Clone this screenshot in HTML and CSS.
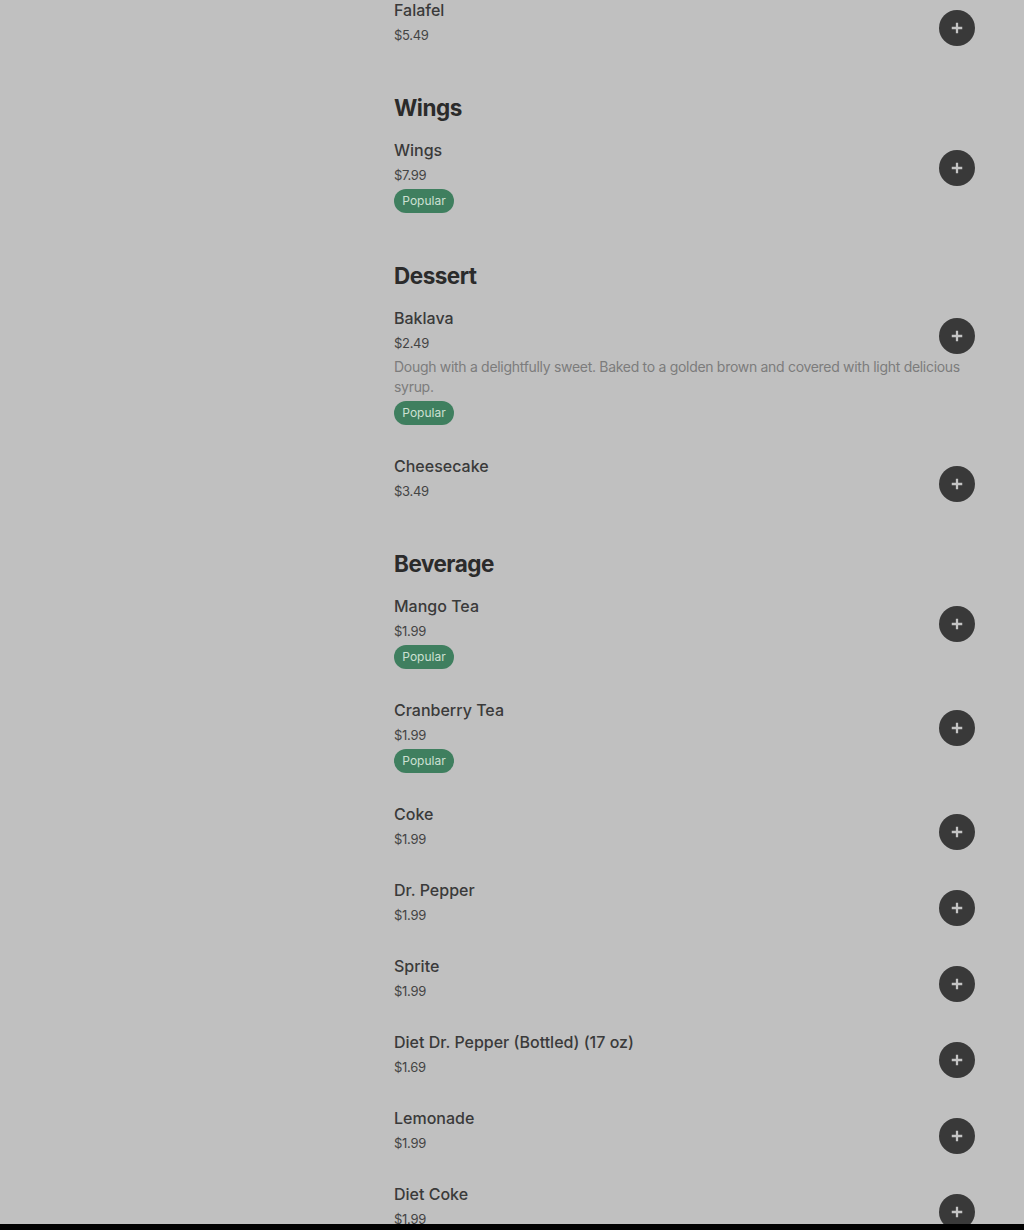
FILE: index.html
```html
<!DOCTYPE html>
<html lang="en">
<head>
<meta charset="utf-8">
<title>Menu</title>
<link rel="stylesheet" href="styles.css">
</head>
<body>
<main class="menu">
  <section class="section first">
    <ul class="items">
      <li class="item">
        <div class="info"><div class="name">Falafel</div><div class="price">$5.49</div></div>
        <button class="add" aria-label="Add"><svg viewBox="0 0 16 16" width="14" height="14"><path d="M8 2v12M2 8h12" stroke="currentColor" stroke-width="2.6"/></svg></button>
      </li>
    </ul>
  </section>

  <section class="section">
    <h2 class="heading">Wings</h2>
    <ul class="items">
      <li class="item">
        <div class="info"><div class="name">Wings</div><div class="price">$7.99</div><span class="badge">Popular</span></div>
        <button class="add" aria-label="Add"><svg viewBox="0 0 16 16" width="14" height="14"><path d="M8 2v12M2 8h12" stroke="currentColor" stroke-width="2.6"/></svg></button>
      </li>
    </ul>
  </section>

  <section class="section">
    <h2 class="heading">Dessert</h2>
    <ul class="items">
      <li class="item">
        <div class="info"><div class="name">Baklava</div><div class="price">$2.49</div><p class="desc">Dough with a delightfully sweet. Baked to a golden brown and covered with light delicious syrup.</p><span class="badge">Popular</span></div>
        <button class="add" aria-label="Add"><svg viewBox="0 0 16 16" width="14" height="14"><path d="M8 2v12M2 8h12" stroke="currentColor" stroke-width="2.6"/></svg></button>
      </li>
      <li class="item">
        <div class="info"><div class="name">Cheesecake</div><div class="price">$3.49</div></div>
        <button class="add" aria-label="Add"><svg viewBox="0 0 16 16" width="14" height="14"><path d="M8 2v12M2 8h12" stroke="currentColor" stroke-width="2.6"/></svg></button>
      </li>
    </ul>
  </section>

  <section class="section">
    <h2 class="heading">Beverage</h2>
    <ul class="items">
      <li class="item">
        <div class="info"><div class="name">Mango Tea</div><div class="price">$1.99</div><span class="badge">Popular</span></div>
        <button class="add" aria-label="Add"><svg viewBox="0 0 16 16" width="14" height="14"><path d="M8 2v12M2 8h12" stroke="currentColor" stroke-width="2.6"/></svg></button>
      </li>
      <li class="item">
        <div class="info"><div class="name">Cranberry Tea</div><div class="price">$1.99</div><span class="badge">Popular</span></div>
        <button class="add" aria-label="Add"><svg viewBox="0 0 16 16" width="14" height="14"><path d="M8 2v12M2 8h12" stroke="currentColor" stroke-width="2.6"/></svg></button>
      </li>
      <li class="item">
        <div class="info"><div class="name">Coke</div><div class="price">$1.99</div></div>
        <button class="add" aria-label="Add"><svg viewBox="0 0 16 16" width="14" height="14"><path d="M8 2v12M2 8h12" stroke="currentColor" stroke-width="2.6"/></svg></button>
      </li>
      <li class="item">
        <div class="info"><div class="name">Dr. Pepper</div><div class="price">$1.99</div></div>
        <button class="add" aria-label="Add"><svg viewBox="0 0 16 16" width="14" height="14"><path d="M8 2v12M2 8h12" stroke="currentColor" stroke-width="2.6"/></svg></button>
      </li>
      <li class="item">
        <div class="info"><div class="name">Sprite</div><div class="price">$1.99</div></div>
        <button class="add" aria-label="Add"><svg viewBox="0 0 16 16" width="14" height="14"><path d="M8 2v12M2 8h12" stroke="currentColor" stroke-width="2.6"/></svg></button>
      </li>
      <li class="item">
        <div class="info"><div class="name">Diet Dr. Pepper (Bottled) (17 oz)</div><div class="price">$1.69</div></div>
        <button class="add" aria-label="Add"><svg viewBox="0 0 16 16" width="14" height="14"><path d="M8 2v12M2 8h12" stroke="currentColor" stroke-width="2.6"/></svg></button>
      </li>
      <li class="item">
        <div class="info"><div class="name">Lemonade</div><div class="price">$1.99</div></div>
        <button class="add" aria-label="Add"><svg viewBox="0 0 16 16" width="14" height="14"><path d="M8 2v12M2 8h12" stroke="currentColor" stroke-width="2.6"/></svg></button>
      </li>
      <li class="item">
        <div class="info"><div class="name">Diet Coke</div><div class="price">$1.99</div></div>
        <button class="add" aria-label="Add"><svg viewBox="0 0 16 16" width="14" height="14"><path d="M8 2v12M2 8h12" stroke="currentColor" stroke-width="2.6"/></svg></button>
      </li>
    </ul>
  </section>
</main>
<div class="bottom-bar"></div>
</body>
</html>
```

FILE: styles.css
```css
* { box-sizing: border-box; }
html, body {
  margin: 0;
  padding: 0;
  background: #c0c0c0;
  font-family: Inter, "Noto Sans", sans-serif;
  color: #333;
  overflow: hidden;
  height: 1230px;
}
.menu {
  width: 581px;
  margin: -2px 0 0 394px;
  display: flex;
  flex-direction: column;
  gap: 47px;
}
.heading {
  margin: 0 0 14px;
  font-size: 22.5px;
  line-height: 32px;
  font-weight: 700;
  color: #2b2b2b;
  letter-spacing: -0.5px;
}
.items {
  list-style: none;
  margin: 0;
  padding: 0;
  display: flex;
  flex-direction: column;
  gap: 29px;
}
.item {
  position: relative;
}
.info {
  display: flex;
  flex-direction: column;
  align-items: flex-start;
}
.name {
  font-size: 16px;
  line-height: 24px;
  font-weight: 500;
  color: #3a3a3a;
}
.price {
  margin-top: 3px;
  font-size: 13px;
  line-height: 20px;
  color: #444;
  letter-spacing: -0.3px;
}
.desc {
  margin: 4px 0 0;
  font-size: 14px;
  line-height: 20px;
  color: #7c7c7c;
  letter-spacing: -0.3px;
}
.badge {
  margin-top: 4px;
  height: 24px;
  width: 60px;
  border-radius: 12px;
  background: #3f7f5f;
  color: #cde0d3;
  font-size: 12px;
  line-height: 24px;
  text-align: center;
}
.add {
  position: absolute;
  top: 12px;
  right: 0;
  width: 36px;
  height: 36px;
  border-radius: 50%;
  border: none;
  padding: 0;
  background: #393939;
  color: #c4c4c4;
  display: flex;
  align-items: center;
  justify-content: center;
}
.bottom-bar {
  position: fixed;
  left: 0;
  right: 0;
  bottom: 0;
  height: 6px;
  background: #000;
}
```
